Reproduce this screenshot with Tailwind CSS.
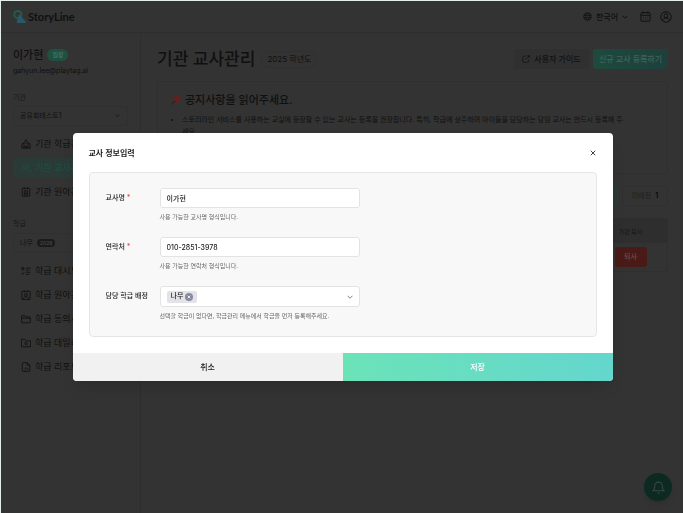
<!DOCTYPE html>
<html lang="ko">
<head>
  <meta charset="UTF-8" />
  <meta name="viewport" content="width=device-width, initial-scale=1.0"/>
  <title>StoryLine - 기관 교사관리</title>
  <script src="https://cdn.jsdelivr.net/npm/@tailwindcss/browser@4"></script>
</head>
<body class="min-h-screen flex flex-col bg-[#333] border-t border-l border-[#e3eeea] text-[#101010] font-['Inter','Noto_Sans_CJK_KR',sans-serif] overflow-hidden">

  <!-- HEADER -->
  <header class="h-8 shrink-0 flex items-center justify-between pl-3 pr-[11px] border-b border-[#2e2e2e]">
    <a href="#" class="flex items-center gap-[2px]">
      <svg class="w-[13px] h-[13px]" viewBox="0 0 13 13" fill="none">
        <circle cx="4.800" cy="4.600" r="3.600" stroke="#235a50" stroke-width="2"/>
        <path d="M6.500 4.500 12.700 11.400Q13 13 11.800 13H4.600Q3.400 13 3.800 11.400L5.500 5Z" fill="#2a5866"/>
      </svg>
      <span class="font-['Lato'] text-[11px] leading-4 font-bold">StoryLine</span>
    </a>
    <div class="flex items-center gap-3">
      <button type="button" class="flex items-center gap-1 text-[8px] leading-3 font-medium">
        <svg class="w-[9px] h-[9px]" viewBox="0 0 24 24" fill="none" stroke="currentColor" stroke-width="2"><circle cx="12" cy="12" r="10"/><path d="M2 9h20M2 15h20M12 2c-6 6-6 14 0 20M12 2c6 6 6 14 0 20"/></svg>
        한국어
        <svg class="w-[6px] h-[6px]" viewBox="0 0 24 24" fill="none" stroke="currentColor" stroke-width="4"><path d="m2 7 10 10L22 7"/></svg>
      </button>
      <button type="button" aria-label="달력">
        <svg class="w-[11px] h-[11px] block" viewBox="0 0 24 24" fill="none" stroke="currentColor" stroke-width="2"><rect x="2" y="3.500" width="20" height="19" rx="2"/><path d="M2 9.500h20M7 1v5M17 1v5"/><path d="M6 14h12M6 18h12" stroke-width="1.500" stroke-dasharray="2 3"/></svg>
      </button>
      <button type="button" aria-label="내 계정" class="-ml-[3px]">
        <svg class="w-[12px] h-[12px] block" viewBox="0 0 24 24" fill="none" stroke="currentColor" stroke-width="2"><circle cx="12" cy="12" r="10.500"/><circle cx="12" cy="9.500" r="4"/><path d="M5 19.500c1-4 3.500-5.500 7-5.500s6 1.500 7 5.500"/></svg>
      </button>
    </div>
  </header>

  <div class="flex flex-1">
    <!-- SIDEBAR -->
    <aside class="w-[140px] shrink-0 px-3 pt-3 border-r border-[#2e2e2e]">
      <div class="flex items-center gap-1 h-5">
        <span class="text-[11px] leading-5 font-medium">이가현</span>
        <span class="h-3 px-[5px] rounded-full bg-[#205041] text-[#48786a] text-[6px] leading-3 font-medium">원장</span>
      </div>
      <p class="text-[7px] leading-3">gahyun.lee@playtag.ai</p>

      <label for="org" class="block mt-[15px] text-[7px] leading-3 text-[#181818]">기관</label>
      <div class="relative mt-[2px]">
        <select id="org" class="appearance-none block w-full h-5 px-[6px] rounded-[3px] border border-[#303030] text-[7px]">
          <option>공유회테스트1</option>
        </select>
        <svg class="absolute right-2 top-[7px] w-[5px] h-[5px]" viewBox="0 0 24 24" fill="none" stroke="#191919" stroke-width="4"><path d="m2 7 10 10L22 7"/></svg>
      </div>

      <nav class="mt-2 flex flex-col gap-1 text-[9px] leading-5 whitespace-nowrap">
        <a href="#" class="h-5 px-2 flex items-center gap-1">
          <svg class="w-[10px] h-[10px] shrink-0" viewBox="0 0 24 24" fill="none" stroke="currentColor" stroke-width="2"><path d="M7 22V8l5-6 5 6v14M7 11H4a2 2 0 0 0-2 2v9h20v-9a2 2 0 0 0-2-2h-3M10 22v-5h4v5M12 7v5"/></svg>
          기관 학급관리
        </a>
        <a href="#" class="h-5 px-2 flex items-center gap-1 rounded-[3px] bg-[#2a3a36] text-[#1d5142]">
          <svg class="w-[10px] h-[10px] shrink-0" viewBox="0 0 24 24" fill="none" stroke="currentColor" stroke-width="2"><circle cx="9" cy="7" r="4.500"/><path d="M1 22c0-6 3-8 8-8s8 2 8 8M16 3a4.500 4.500 0 0 1 0 8.500M19 15c3 1 4 3.500 4 7"/></svg>
          기관 교사관리
        </a>
        <a href="#" class="h-5 px-2 flex items-center gap-1">
          <svg class="w-[10px] h-[10px] shrink-0" viewBox="0 0 24 24" fill="none" stroke="currentColor" stroke-width="2"><rect x="3" y="3" width="18" height="19" rx="1"/><path d="M8 1v4M16 1v4M8 9h8v7H8zM12 11v3M7 19h10"/></svg>
          기관 원아관리
        </a>
      </nav>

      <p class="mt-4 text-[7px] leading-3 text-[#181818]">학급</p>
      <button type="button" class="mt-[3px] w-full h-5 px-[6px] flex items-center gap-1 rounded-[3px] border border-[#303030] text-[7px]">
        나무
        <span class="h-2 px-[3px] rounded-full bg-[#1b1b1b] text-[#4b4b4b] text-[5px] leading-2 font-medium">2026</span>
      </button>

      <nav class="mt-2 flex flex-col gap-1 text-[9px] leading-5 whitespace-nowrap">
        <a href="#" class="h-5 px-2 flex items-center gap-1">
          <svg class="w-[10px] h-[10px] shrink-0" viewBox="0 0 24 24" fill="none" stroke="currentColor" stroke-width="2"><path d="M2 4h5v5H2zM1 17l3 3 4-5M12 5h11M12 10h8M12 15h11M12 20h8"/></svg>
          학급 대시보드
        </a>
        <a href="#" class="h-5 px-2 flex items-center gap-1">
          <svg class="w-[10px] h-[10px] shrink-0" viewBox="0 0 24 24" fill="none" stroke="currentColor" stroke-width="2"><rect x="2" y="3" width="20" height="20" rx="2"/><path d="M8 1v4M16 1v4M6 22c0-5 3-6 6-6s6 1 6 6"/><circle cx="12" cy="11.500" r="3.500"/></svg>
          학급 원아관리
        </a>
        <a href="#" class="h-5 px-2 flex items-center gap-1">
          <svg class="w-[10px] h-[10px] shrink-0" viewBox="0 0 24 24" fill="none" stroke="currentColor" stroke-width="2"><path d="M2 10V4h7l2 3h10v3M1 10h22l-1 11H2z"/></svg>
          학급 동의서
        </a>
        <a href="#" class="h-5 px-2 flex items-center gap-1">
          <svg class="w-[10px] h-[10px] shrink-0" viewBox="0 0 24 24" fill="none" stroke="currentColor" stroke-width="2"><path d="M1 21V3h8l3 4h11v14z"/><circle cx="11.500" cy="13" r="2.500"/><path d="m13.500 15 3 3"/></svg>
          학급 데일리
        </a>
        <a href="#" class="h-5 px-2 flex items-center gap-1">
          <svg class="w-[10px] h-[10px] shrink-0" viewBox="0 0 24 24" fill="none" stroke="currentColor" stroke-width="2"><path d="M15 1.500H5a2 2 0 0 0-2 2v17a2 2 0 0 0 2 2h14a2 2 0 0 0 2-2V7.500zM15 1.500v6h6M8 18v-2M12 18v-5M16 18v-3"/></svg>
          학급 리포트
        </a>
      </nav>
    </aside>

    <!-- CONTENT -->
    <main class="flex-1 min-w-0 pl-4 pr-[15px] pt-4">
      <div class="flex items-center justify-between h-5">
        <div class="flex items-center gap-[6px]">
          <h1 class="text-[17px] leading-5 font-medium">기관 교사관리</h1>
          <span class="h-[17px] px-[5px] rounded-full border border-[#303030] text-[8px] leading-[15px]">2025 학년도</span>
        </div>
        <div class="flex items-center gap-1 text-[8px] font-medium">
          <button type="button" class="h-5 w-[75px] flex items-center justify-center gap-1 rounded-[3px] bg-[#303030]">
            <svg class="w-2 h-2" viewBox="0 0 24 24" fill="none" stroke="currentColor" stroke-width="2"><path d="M10 4H5a3 3 0 0 0-3 3v12a3 3 0 0 0 3 3h12a3 3 0 0 0 3-3v-5M14 2h8v8M22 2 10 14"/></svg>
            사용자 가이드
          </button>
          <button type="button" class="h-5 w-[75px] rounded-[3px] bg-linear-to-r from-[#1e4a3c] to-[#1d403c] text-[#42635b]">신규 교사 등록하기</button>
        </div>
      </div>

      <section class="mt-3 h-[93px] px-3 pt-[10px] border border-[#2f2f2f] rounded-[3px]">
        <h2 class="flex items-center gap-[3px] text-[11px] leading-4 font-medium">
          <svg class="w-3 h-3" viewBox="0 0 24 24"><path d="m1 23 8-10 2 2z" fill="#222"/><path d="m14 1 9 9-3 1-4 4c1 3 0 4-1 5L4 9c2-2 4-1 5-1l4-4z" fill="#642020"/></svg>
          공지사항을 읽어주세요.
        </h2>
        <ul class="mt-[6px] pl-3 pr-8 list-disc text-[7px] leading-3">
          <li>스토리라인 서비스를 사용하는 교실에 등장할 수 있는 교사는 등록을 권장합니다. 특히, 학급에 상주하며 아이들을 담당하는 담임 교사는 반드시 등록해 주세요.</li>
        </ul>
      </section>

      <div class="mt-3 flex justify-end gap-1 text-[7px]">
        <button type="button" class="h-5 w-[46px] rounded-[3px] border border-[#1f4038] bg-[#2c3835]">전체</button>
        <button type="button" class="h-5 w-[46px] flex items-center justify-center gap-1 rounded-[3px] border border-[#2f2f2f] text-[#1f1f1f]">미배정 <b class="font-semibold text-[#080808]">1</b></button>
      </div>

      <div class="mt-3 border border-[#2f2f2f] rounded-[3px] overflow-hidden">
        <table class="w-full text-center">
          <thead class="bg-[#2e2e2e]">
            <tr class="h-6 text-[6px] text-[#141414]">
              <th class="font-normal">교사명</th>
              <th class="w-[73px] font-normal">기관 퇴사</th>
            </tr>
          </thead>
          <tbody>
            <tr class="h-7 text-[7px]">
              <td>이가현</td>
              <td><button type="button" class="h-5 w-8 rounded-[3px] bg-[#4a1a16] text-[#6b4a47] font-medium">퇴사</button></td>
            </tr>
          </tbody>
        </table>
      </div>
    </main>
  </div>

  <button type="button" aria-label="알림" class="fixed right-[11px] bottom-3 w-7 h-7 flex items-center justify-center rounded-full bg-[#0d2a22] text-[#35483f] shadow-md">
    <svg class="w-[13px] h-[13px]" viewBox="0 0 24 24" fill="none" stroke="currentColor" stroke-width="2"><path d="M2 18c3-2 3-5 3-9a7 7 0 0 1 14 0c0 4 0 7 3 9zM10 22h4"/></svg>
  </button>

  <!-- MODAL -->
  <div class="fixed inset-0 flex items-center justify-center pl-[2px] pt-px">
    <form role="dialog" aria-labelledby="modal-title" class="w-[540px] bg-white rounded-[4px] overflow-hidden shadow-lg text-[#222]">
      <div class="px-4 pb-4">
        <div class="h-[39px] flex items-center justify-between">
          <h2 id="modal-title" class="text-[8px] leading-4 font-semibold">교사 정보입력</h2>
          <button type="button" aria-label="닫기" class="p-px text-[#444]">
            <svg class="block w-[6px] h-[6px]" viewBox="0 0 24 24" fill="none" stroke="currentColor" stroke-width="4"><path d="m3 3 18 18M21 3 3 21"/></svg>
          </button>
        </div>

        <div class="px-4 pt-[15px] pb-4 flex flex-col gap-4 bg-[#f8f8f8] border border-[#e6e6e6] rounded-[4px] text-[7px]">
          <div class="flex">
            <label for="name" class="w-[54px] leading-5 font-medium">교사명 <span class="text-[#e5484d]">*</span></label>
            <div class="w-[200px]">
              <input id="name" type="text" value="이가현" class="block w-full h-5 px-[6px] bg-white border border-[#e3e3e3] rounded-[3px] font-medium"/>
              <p class="mt-1 text-[6px] leading-[9px] text-[#666]">사용 가능한 교사명 형식입니다.</p>
            </div>
          </div>
          <div class="flex">
            <label for="phone" class="w-[54px] leading-5 font-medium">연락처 <span class="text-[#e5484d]">*</span></label>
            <div class="w-[200px]">
              <input id="phone" type="text" value="010-2851-3978" class="block w-full h-5 px-[6px] bg-white border border-[#e3e3e3] rounded-[3px] font-medium"/>
              <p class="mt-1 text-[6px] leading-[9px] text-[#666]">사용 가능한 연락처 형식입니다.</p>
            </div>
          </div>
          <div class="flex">
            <span id="class-label" class="w-[54px] leading-5 font-medium whitespace-nowrap">담당 학급 배정</span>
            <div class="w-[200px]">
              <div role="combobox" aria-labelledby="class-label" aria-expanded="false" tabindex="0" class="h-[21px] px-[6px] flex items-center justify-between bg-white border border-[#e3e3e3] rounded-[3px]">
                <span class="h-3 px-1 flex items-center gap-[2px] rounded-[2px] bg-[#e2e2e8] font-medium">
                  나무
                  <button type="button" aria-label="나무 삭제">
                    <svg class="block w-2 h-2" viewBox="0 0 24 24" fill="none"><circle cx="12" cy="12" r="12" fill="#8489a0"/><path d="m8 8 8 8M16 8l-8 8" stroke="#fff" stroke-width="2.500"/></svg>
                  </button>
                </span>
                <svg class="w-[6px] h-[6px]" viewBox="0 0 24 24" fill="none" stroke="#555" stroke-width="3"><path d="m2 7 10 10L22 7"/></svg>
              </div>
              <p class="mt-1 text-[6px] leading-[9px] text-[#666]">선택할 학급이 없다면, 학급관리 메뉴에서 학급을 먼저 등록해주세요.</p>
            </div>
          </div>
        </div>
      </div>

      <div class="grid grid-cols-2 h-7 text-[8px] font-medium">
        <button type="button" class="bg-[#f1f1f1]">취소</button>
        <button type="submit" class="bg-linear-to-r from-[#6be3b8] to-[#64d6cd] text-white">저장</button>
      </div>
    </form>
  </div>
</body>
</html>
